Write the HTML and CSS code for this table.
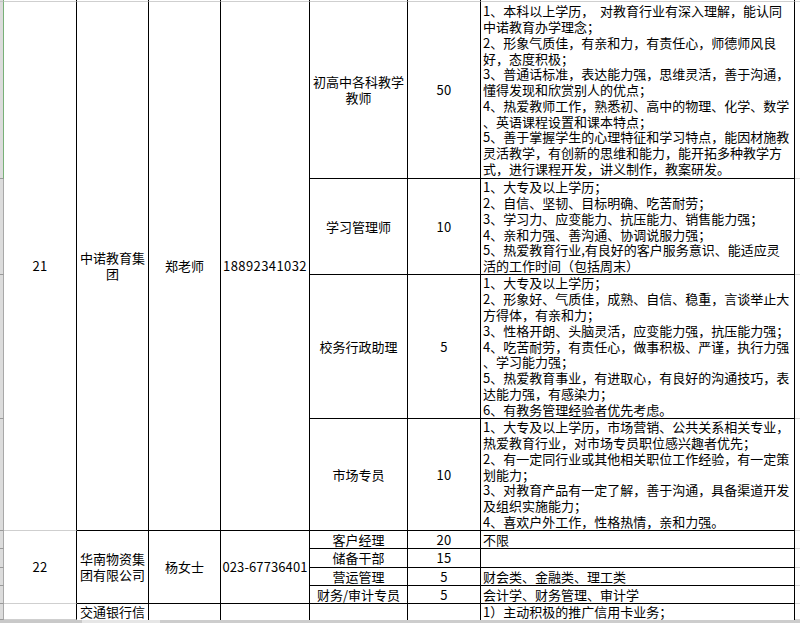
FILE: index.html
```html
<!DOCTYPE html>
<html lang="zh-CN">
<head>
<meta charset="utf-8">
<title>招聘信息表</title>
<link rel="stylesheet" href="styles.css">
</head>
<body>
<table class="sheet">
  <colgroup>
    <col class="c-rh">
    <col class="c-no">
    <col class="c-co">
    <col class="c-ct">
    <col class="c-ph">
    <col class="c-pos">
    <col class="c-num">
    <col class="c-req">
    <col class="c-ex">
  </colgroup>
  <tr class="r0">
    <td class="rh rh-top"></td><td class="no top"></td><td class="top"></td><td class="top"></td><td class="top"></td><td class="top"></td><td class="top"></td><td class="top"></td><td class="ex top"></td>
  </tr>
  <tr class="r1">
    <td class="rh rh-sel"></td>
    <td class="no num-cell" rowspan="4">21</td>
    <td class="ctr" rowspan="4">中诺教育集<br>团</td>
    <td class="ctr" rowspan="4">郑老师</td>
    <td class="ctr phone" rowspan="4">18892341032</td>
    <td class="ctr">初高中各科教学<br>教师</td>
    <td class="ctr num-cell">50</td>
    <td class="req">1、本科以上学历，&nbsp;&nbsp;对教育行业有深入理解，能认同<br>中诺教育办学理念；<br>2、形象气质佳，有亲和力，有责任心，师德师风良<br>好，态度积极；<br>3、普通话标准，表达能力强，思维灵活，善于沟通，<br>懂得发现和欣赏别人的优点；<br>4、热爱教师工作，熟悉初、高中的物理、化学、数学<br>、英语课程设置和课本特点；<br>5、善于掌握学生的心理特征和学习特点，能因材施教<br>灵活教学，有创新的思维和能力，能开拓多种教学方<br>式，进行课程开发，讲义制作，教案研发。</td>
    <td class="ex"></td>
  </tr>
  <tr class="r2">
    <td class="rh"></td>
    <td class="ctr">学习管理师</td>
    <td class="ctr num-cell">10</td>
    <td class="req">1、大专及以上学历；<br>2、自信、坚韧、目标明确、吃苦耐劳；<br>3、学习力、应变能力、抗压能力、销售能力强；<br>4、亲和力强、善沟通、协调说服力强；<br>5、热爱教育行业,有良好的客户服务意识、能适应灵<br>活的工作时间（包括周末）</td>
    <td class="ex"></td>
  </tr>
  <tr class="r3">
    <td class="rh"></td>
    <td class="ctr">校务行政助理</td>
    <td class="ctr num-cell">5</td>
    <td class="req">1、大专及以上学历；<br>2、形象好、气质佳，成熟、自信、稳重，言谈举止大<br>方得体，有亲和力；<br>3、性格开朗、头脑灵活，应变能力强，抗压能力强；<br>4、吃苦耐劳，有责任心，做事积极、严谨，执行力强<br>、学习能力强；<br>5、热爱教育事业，有进取心，有良好的沟通技巧，表<br>达能力强，有感染力；<br>6、有教务管理经验者优先考虑。</td>
    <td class="ex"></td>
  </tr>
  <tr class="r4">
    <td class="rh"></td>
    <td class="ctr">市场专员</td>
    <td class="ctr num-cell">10</td>
    <td class="req">1、大专及以上学历，市场营销、公共关系相关专业，<br>热爱教育行业，对市场专员职位感兴趣者优先；<br>2、有一定同行业或其他相关职位工作经验，有一定策<br>划能力；<br>3、对教育产品有一定了解，善于沟通，具备渠道开发<br>及组织实施能力；<br>4、喜欢户外工作，性格热情，亲和力强。</td>
    <td class="ex"></td>
  </tr>
  <tr class="r5">
    <td class="rh"></td>
    <td class="no num-cell" rowspan="4">22</td>
    <td class="ctr" rowspan="4">华南物资集<br>团有限公司</td>
    <td class="ctr" rowspan="4">杨女士</td>
    <td class="ctr phone2" rowspan="4">023-67736401</td>
    <td class="ctr">客户经理</td>
    <td class="ctr num-cell">20</td>
    <td class="req">不限</td>
    <td class="ex"></td>
  </tr>
  <tr class="r6">
    <td class="rh"></td>
    <td class="ctr">储备干部</td>
    <td class="ctr num-cell">15</td>
    <td class="req"></td>
    <td class="ex"></td>
  </tr>
  <tr class="r7">
    <td class="rh"></td>
    <td class="ctr">营运管理</td>
    <td class="ctr num-cell">5</td>
    <td class="req">财会类、金融类、理工类</td>
    <td class="ex"></td>
  </tr>
  <tr class="r8">
    <td class="rh"></td>
    <td class="ctr">财务/审计专员</td>
    <td class="ctr num-cell">5</td>
    <td class="req">会计学、财务管理、审计学</td>
    <td class="ex"></td>
  </tr>
  <tr class="r9">
    <td class="rh"></td>
    <td class="no"></td>
    <td class="ctr">交通银行信</td>
    <td></td>
    <td></td>
    <td></td>
    <td></td>
    <td class="req">1）主动积极的推广信用卡业务；</td>
    <td class="ex"></td>
  </tr>
</table>
<div class="scrollbar">
  <div class="sb-a"></div>
  <div class="sb-b"></div>
  <div class="sb-c"></div>
</div>
</body>
</html>
```

FILE: styles.css
```css
html, body {
  margin: 0;
  padding: 0;
  background: #ffffff;
}

body {
  width: 800px;
  height: 623px;
  overflow: hidden;
  font-family: "Noto Sans CJK SC", "Noto Sans", sans-serif;
  font-size: 13px;
  color: #000000;
}

.sheet {
  border-collapse: separate;
  border-spacing: 0;
  table-layout: fixed;
  width: 800px;
}

.sheet td {
  box-sizing: border-box;
  padding: 0;
  border-right: 1px solid #000000;
  border-bottom: 1px solid #000000;
  line-height: 15.8px;
  white-space: nowrap;
  vertical-align: middle;
}

.c-rh { width: 4px; }
.c-no { width: 73px; }
.c-co { width: 72px; }
.c-ct { width: 72px; }
.c-ph { width: 89px; }
.c-pos { width: 98px; }
.c-num { width: 73px; }
.c-req { width: 314px; }
.c-ex { width: 5px; }

/* row heights (border-box, including bottom border) */
.r0 td { height: 2px; line-height: 0; }
.r1 td { height: 177px; }
.r2 td { height: 96px; }
.r3 td { height: 144px; }
.r4 td { height: 112px; }
.r5 td { height: 18px; }
.r6 td { height: 19px; }
.r7 td { height: 18px; }
.r8 td { height: 18px; }
.r9 td { height: 16px; border-bottom: none; }

.sheet td.top {
  border-bottom: 1px solid #cfcfcf;
}

/* excel row header strip */
.sheet td.rh {
  background: #dcdcdc;
  border-right: 1px solid #a8a8a8;
  border-bottom: 1px solid #9a9a9a;
}

.sheet td.rh-top {
  border-right-color: #78b078;
  border-bottom-color: #c4c4c4;
}

.sheet td.rh-sel {
  border-right-color: #78b078;
}

/* first column has only light gridlines */
.sheet td.no {
  border-bottom: 1px solid #cfcfcf;
}

.sheet td.ex {
  border-right: none;
  border-bottom: 1px solid #d6d6d6;
}

.ctr {
  text-align: center;
}

.num-cell {
  text-align: center;
  letter-spacing: 0.3px;
}

.phone {
  letter-spacing: 0.4px;
}

.phone2 {
  letter-spacing: 0.1px;
}

.sheet td.req {
  text-align: left;
  padding-left: 2px;
}

.scrollbar {
  display: flex;
  height: 3px;
}

.sb-a {
  width: 82px;
  background: #c9c9c9;
}

.sb-b {
  width: 78px;
  background: #e6e6e6;
}

.sb-c {
  flex: 1;
  background: #cdcdcd;
}
```
